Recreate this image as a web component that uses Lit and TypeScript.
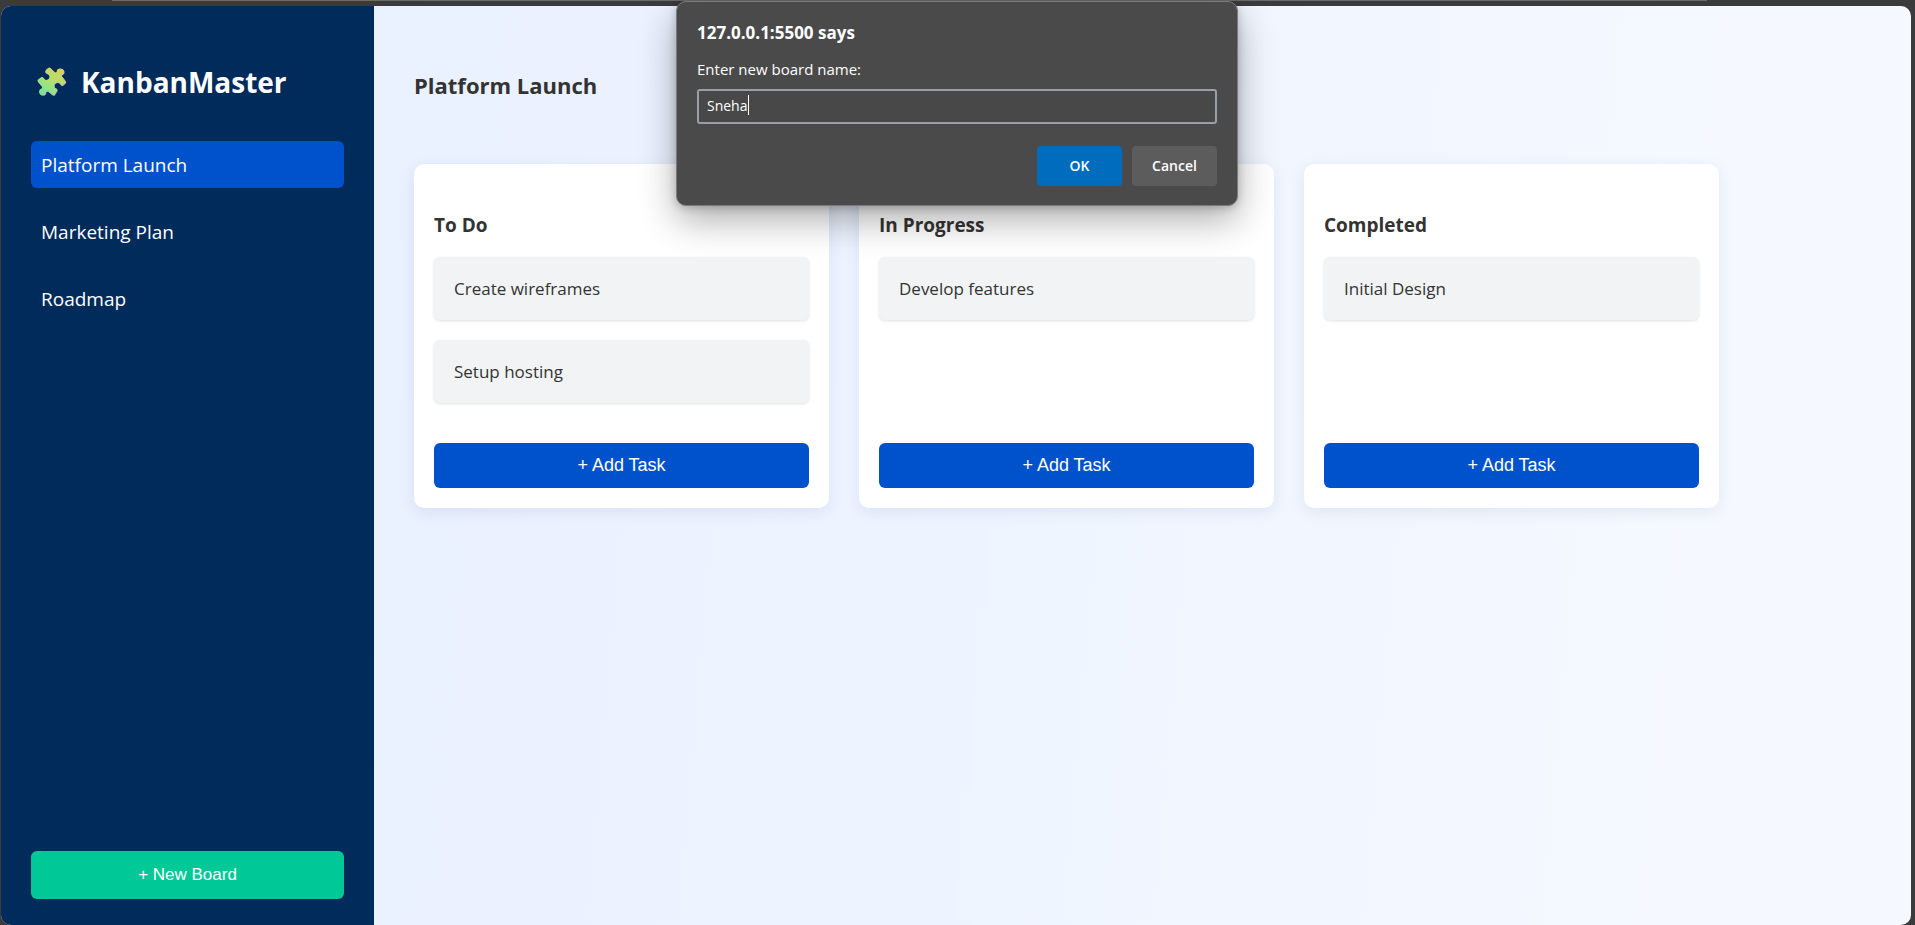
import { LitElement, html, css, svg } from "lit";
import { customElement, property, state } from "lit/decorators.js";
import { classMap } from "lit/directives/class-map.js";

interface Column {
  title: string;
  tasks: string[];
}

const puzzleIcon = svg`
  <defs>
    <linearGradient id="piece" x1="0.8" y1="0" x2="0.2" y2="1">
      <stop offset="0" stop-color="#d9cf5b" />
      <stop offset="0.5" stop-color="#b2e070" />
      <stop offset="1" stop-color="#6ce897" />
    </linearGradient>
  </defs>
  <path fill="#c9a5e6" transform="translate(0.6 0.8)" d="M8.6 3.2 11 1Q12.2 0 13.4 1L17.6 5Q18.6 5.8 19.5 5 20 4.4 19.8 3.6 20.2 1.8 22.4 1.5 26.8 1.2 27 4.4 27 6.4 25.2 7.3 24 7.6 24.4 8.8L28.2 13.6Q29.2 14.8 28.2 15.8L25.6 18Q24.4 18.8 23.6 17.8 23 15.4 20.4 15.3 17 15.6 17 18.8 17.2 21.2 19.4 21.6 20.6 22 20 23.2L17.4 27.4Q16.2 28.6 15 27.6L11 24.2Q9.6 23.4 8.8 24.4 8.8 27.6 5.6 28 2.2 27.8 2 24.6 2.2 22 4.6 21.4 5.6 20.8 5 19.6L.8 14.6Q0 13.4 1 12.4L4.6 10Q5.8 9.6 6.4 10.8 7.4 13.4 10 12.8 12.8 12 12.4 9 11.8 6.8 9.2 6.2 7.2 5 8.6 3.2Z" />
  <path fill="url(#piece)" d="M8.6 3.2 11 1Q12.2 0 13.4 1L17.6 5Q18.6 5.8 19.5 5 20 4.4 19.8 3.6 20.2 1.8 22.4 1.5 26.8 1.2 27 4.4 27 6.4 25.2 7.3 24 7.6 24.4 8.8L28.2 13.6Q29.2 14.8 28.2 15.8L25.6 18Q24.4 18.8 23.6 17.8 23 15.4 20.4 15.3 17 15.6 17 18.8 17.2 21.2 19.4 21.6 20.6 22 20 23.2L17.4 27.4Q16.2 28.6 15 27.6L11 24.2Q9.6 23.4 8.8 24.4 8.8 27.6 5.6 28 2.2 27.8 2 24.6 2.2 22 4.6 21.4 5.6 20.8 5 19.6L.8 14.6Q0 13.4 1 12.4L4.6 10Q5.8 9.6 6.4 10.8 7.4 13.4 10 12.8 12.8 12 12.4 9 11.8 6.8 9.2 6.2 7.2 5 8.6 3.2Z" />
`;

@customElement("board-column")
class BoardColumn extends LitElement {
  @property({ attribute: false }) column: Column = { title: "", tasks: [] };

  static styles = css`
    :host {
      display: flex;
      flex-direction: column;
      box-sizing: border-box;
      padding: 40px 20px 20px;
      border-radius: 10px;
      background: #fff;
      box-shadow: 0 4px 16px rgba(30, 50, 110, 0.09);
    }
    .title {
      margin: 0 0 11px;
      font-size: 19px;
      line-height: 42px;
      font-weight: 700;
    }
    .tasks {
      display: flex;
      flex-direction: column;
      flex: 1;
      gap: 20px;
      margin: 0 0 40px;
      padding: 0;
      list-style: none;
    }
    .task {
      padding: 20px;
      border-radius: 6px;
      background: #f1f3f5;
      box-shadow: 0 1px 3px rgba(0, 0, 0, 0.12);
      font-size: 17px;
      line-height: 23px;
    }
    .add {
      padding: 12px;
      border: 0;
      border-radius: 6px;
      background: #0052cc;
      color: #fff;
      font-family: "Liberation Sans", Arial, sans-serif;
      font-size: 18px;
      line-height: 21px;
      cursor: pointer;
    }
  `;

  render() {
    return html`
      <h3 class="title">${this.column.title}</h3>
      <ul class="tasks">
        ${this.column.tasks.map((t) => html`<li class="task">${t}</li>`)}
      </ul>
      <button class="add" type="button">+ Add Task</button>
    `;
  }
}

@customElement("name-prompt")
class NamePrompt extends LitElement {
  static styles = css`
    :host {
      display: block;
      box-sizing: border-box;
      width: 562px;
      padding: 19px 20px;
      border: 1px solid #7b7b7b;
      border-radius: 10px;
      background: #4a4a4a;
      color: #fff;
      box-shadow: 0 14px 36px rgba(0, 0, 0, 0.32), 0 2px 8px rgba(0, 0, 0, 0.2);
    }
    .form {
      display: flex;
      flex-direction: column;
    }
    .origin {
      margin: 0 0 12px;
      font-size: 17px;
      line-height: 24px;
      font-weight: 700;
    }
    .label {
      margin-bottom: 8px;
      font-size: 15px;
      line-height: 24px;
    }
    .field {
      position: relative;
      display: flex;
      margin-bottom: 22px;
    }
    .input {
      box-sizing: border-box;
      width: 100%;
      height: 35px;
      padding: 0 8px 2px;
      border: 2px solid #9a9ea6;
      border-radius: 3px;
      outline: 0;
      background: #484848;
      color: #fff;
      font: inherit;
      font-size: 14px;
    }
    .caret {
      position: absolute;
      left: 51px;
      top: 6px;
      width: 1px;
      height: 20px;
      background: #fff;
    }
    .actions {
      display: flex;
      justify-content: flex-end;
      gap: 10px;
    }
    .action {
      width: 85px;
      height: 40px;
      padding: 0 0 2px;
      border: 0;
      border-radius: 4px;
      background: #5c5c5c;
      color: #fff;
      font: inherit;
      font-size: 14px;
      font-weight: 600;
    }
    .primary {
      background: #006cbe;
    }
  `;

  render() {
    return html`
      <form class="form" @submit=${(e: Event) => e.preventDefault()}>
        <h2 class="origin">127.0.0.1:5500 says</h2>
        <label class="label" for="board-name">Enter new board name:</label>
        <div class="field">
          <input class="input" id="board-name" type="text" value="Sneha" autocomplete="off" />
          <span class="caret"></span>
        </div>
        <div class="actions">
          <button class="action primary" type="submit">OK</button>
          <button class="action" type="button">Cancel</button>
        </div>
      </form>
    `;
  }
}

@customElement("app-root")
class AppRoot extends LitElement {
  @state() private boards = ["Platform Launch", "Marketing Plan", "Roadmap"];
  @state() private active = 0;
  @state() private columns: Column[] = [
    { title: "To Do", tasks: ["Create wireframes", "Setup hosting"] },
    { title: "In Progress", tasks: ["Develop features"] },
    { title: "Completed", tasks: ["Initial Design"] },
  ];

  static styles = css`
    :host {
      display: flex;
      flex-direction: column;
      box-sizing: border-box;
      min-height: 100vh;
      padding: 0 4px 0 1px;
      background: #3b3b3b;
      color: #333;
      font-family: "Segoe UI", "Open Sans", sans-serif;
    }
    .strip {
      height: 5px;
      margin: 0 204px 0 111px;
      border-top: 1px solid #6b6b6b;
    }
    .window {
      display: flex;
      flex: 1;
      overflow: hidden;
      border-radius: 10px;
      background: linear-gradient(95deg, #e6eeff, #f5f9ff 90%);
    }
    .sidebar {
      display: flex;
      flex-direction: column;
      box-sizing: border-box;
      flex: 0 0 373px;
      padding: 56px 30px 26px;
      background: #002b5b;
      color: #fff;
    }
    .logo {
      display: flex;
      align-items: center;
      gap: 14px;
      margin: 0 0 39px;
      padding-left: 6px;
      font-size: 28px;
      line-height: 40px;
      font-weight: 700;
    }
    .mark {
      width: 30px;
      height: 30px;
    }
    .boards {
      display: flex;
      flex-direction: column;
      flex: 1;
      gap: 20px;
    }
    .board {
      padding: 11px 10px 9px;
      border-radius: 6px;
      color: #fff;
      font-size: 19px;
      line-height: 27px;
      text-decoration: none;
    }
    .active {
      background: #0052cc;
    }
    .new {
      padding: 14px;
      border: 0;
      border-radius: 6px;
      background: #00c897;
      color: #fff;
      font-family: "Liberation Sans", Arial, sans-serif;
      font-size: 17px;
      line-height: 20px;
      cursor: pointer;
    }
    .main {
      flex: 1;
      min-width: 0;
      padding: 59px 40px 40px;
    }
    .heading {
      margin: 0 0 59px;
      font-size: 22px;
      line-height: 40px;
      font-weight: 700;
    }
    .columns {
      display: grid;
      grid-template-columns: repeat(3, minmax(0, 1fr));
      gap: 30px;
      max-width: 1305px;
    }
    .prompt {
      position: absolute;
      top: 1px;
      left: 0;
      right: 1px;
      margin: 0 auto;
    }
  `;

  render() {
    return html`
      <div class="strip"></div>
      <div class="window">
        <aside class="sidebar">
          <h1 class="logo">
            <svg class="mark" viewBox="0 0 30 30" aria-hidden="true">${puzzleIcon}</svg>
            <span>KanbanMaster</span>
          </h1>
          <nav class="boards">
            ${this.boards.map(
              (name, i) => html`<a
                class=${classMap({ board: true, active: i === this.active })}
                href="#"
                @click=${(e: Event) => {
                  e.preventDefault();
                  this.active = i;
                }}
                >${name}</a
              >`
            )}
          </nav>
          <button class="new" type="button">+ New Board</button>
        </aside>
        <main class="main">
          <h2 class="heading">${this.boards[this.active]}</h2>
          <div class="columns">
            ${this.columns.map((c) => html`<board-column .column=${c}></board-column>`)}
          </div>
        </main>
      </div>
      <name-prompt class="prompt" role="dialog" aria-label="Enter new board name"></name-prompt>
    `;
  }
}
